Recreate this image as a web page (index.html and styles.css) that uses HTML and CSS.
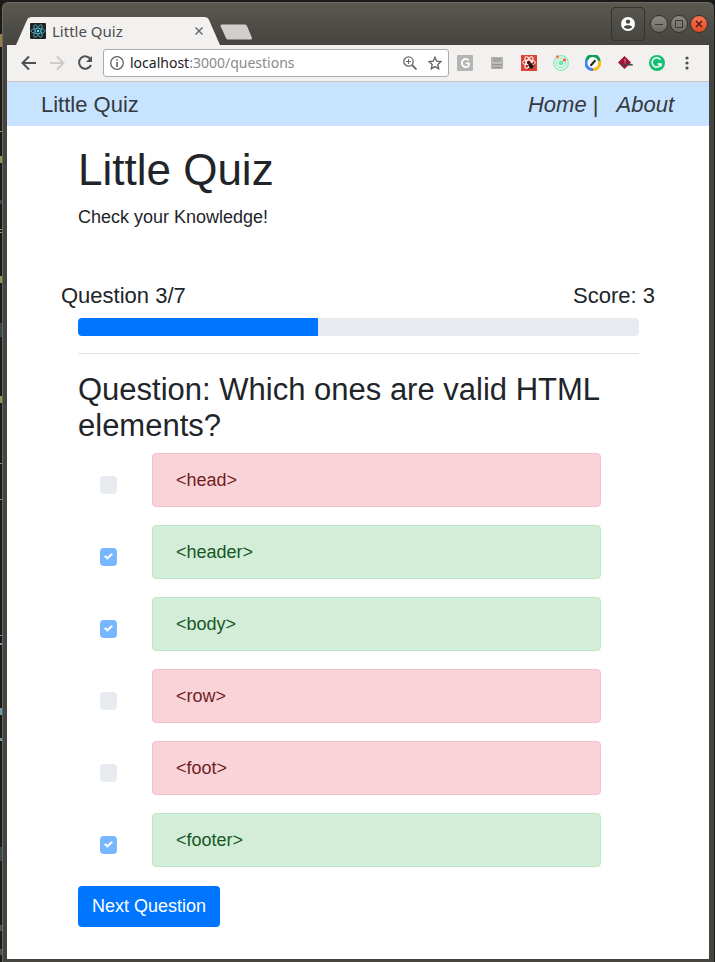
FILE: index.html
```html
<!DOCTYPE html>
<html lang="en">
<head>
<meta charset="utf-8">
<meta name="viewport" content="width=device-width, initial-scale=1">
<title>Little Quiz</title>
<link rel="stylesheet" href="styles.css">
</head>
<body>
<svg class="backdrop" aria-hidden="true" viewBox="0 0 2 962" preserveAspectRatio="none">
<path fill="#9a7a48" d="M0 34h2v13H0z"/><path fill="#a4914c" d="M0 131h2v1H0zM0 229h2v1H0zM0 232h2v1H0z"/>
<path fill="#7f9a55" d="M0 156h2v7H0zM0 276h2v7H0zM0 396h2v7H0z"/>
<path fill="#35474d" d="M0 200h2v4H0zM0 323h2v14H0zM0 847h2v14H0z"/>
<path fill="#888" d="M0 463h2v1H0zM0 499h2v1H0z"/>
<path fill="#7297ac" d="M0 635h2v1H0zM0 643h2v2H0zM0 708h2v7H0zM0 738h2v3H0z"/>
<path fill="#485650" d="M0 925h2v6H0zM0 949h2v6H0z"/>
</svg>
<div class="window">
  <div class="titlebar">
    <div class="tab">
      <svg class="tab-shape" viewBox="0 0 206 28" preserveAspectRatio="none" aria-hidden="true"><path fill="#f2f1f0" d="M0 28L11 3Q12 0 16 0H188Q192 0 193 3L204 28z"/></svg>
      <svg class="favicon" viewBox="0 0 16 16" aria-hidden="true"><rect width="16" height="16" rx="1" fill="#222"/><g fill="none" stroke="#4fb4ce" stroke-width=".8"><ellipse cx="8" cy="8" rx="7" ry="2.600"/><ellipse cx="8" cy="8" rx="7" ry="2.600" transform="rotate(60 8 8)"/><ellipse cx="8" cy="8" rx="7" ry="2.600" transform="rotate(120 8 8)"/></g><circle cx="8" cy="8" r="1.300" fill="#61dafb"/></svg>
      <span class="tab-title">Little Quiz</span>
      <button class="icon-button" type="button" aria-label="Close tab"><svg width="8" height="8" viewBox="0 0 8 8"><path d="M.5.5l7 7M7.500.5l-7 7" stroke="#666" stroke-width="1.400"/></svg></button>
    </div>
    <button class="icon-button new-tab" type="button" aria-label="New tab"><svg width="34" height="16" viewBox="0 0 34 16"><path d="M2.500.5H26Q27.500.5 28 2L33 14Q33 15.500 32 15.500H9Q7.500 15.500 7 14L1.500 2Q1 .5 2.500.5z" fill="#d0cfcd"/></svg></button>
    <div class="window-controls">
      <button class="profile" type="button" aria-label="Profile"><svg width="14" height="14" viewBox="0 0 14 14"><circle cx="7" cy="7" r="7" fill="#fff"/><circle cx="7" cy="4.600" r="2.200" fill="#494843"/><path d="M2.700 9.800C4 7.600 10 7.600 11.300 9.800 9.500 12.600 4.500 12.600 2.700 9.800z" fill="#494843"/></svg></button>
      <button class="control" type="button" aria-label="Minimize"><svg width="16" height="16" viewBox="0 0 16 16"><path d="M4 8.500h8" stroke="#3a3935"/></svg></button>
      <button class="control" type="button" aria-label="Maximize"><svg width="16" height="16" viewBox="0 0 16 16"><path d="M4.500 4.500h7v7h-7z" fill="none" stroke="#3a3935"/></svg></button>
      <button class="control close" type="button" aria-label="Close"><svg width="16" height="16" viewBox="0 0 16 16"><path d="M5 5l6 6M11 5l-6 6" stroke="#45180d" stroke-width="1.300"/></svg></button>
    </div>
  </div>
  <div class="toolbar">
    <button class="icon-button" type="button" aria-label="Back"><svg width="16" height="16" viewBox="0 0 16 16"><path d="M15 8H2M8 1.500L1.500 8 8 14.500" fill="none" stroke="#505050" stroke-width="2"/></svg></button>
    <button class="icon-button" type="button" aria-label="Forward"><svg width="16" height="16" viewBox="0 0 16 16"><path d="M1 8h13M8 1.500L14.500 8 8 14.500" fill="none" stroke="#cdcccb" stroke-width="2"/></svg></button>
    <button class="icon-button" type="button" aria-label="Reload"><svg width="16" height="16" viewBox="0 0 16 16"><path d="M13.600 4.300A6.200 6.200 0 1 0 14 10" fill="none" stroke="#505050" stroke-width="2"/><path d="M15 1v6H9z" fill="#505050"/></svg></button>
    <div class="address">
      <svg width="14" height="14" viewBox="0 0 14 14" aria-hidden="true"><circle cx="7" cy="7" r="6.300" fill="none" stroke="#5f5f5f" stroke-width="1.300"/><path d="M7 3.200v1.600M7 6v5" stroke="#5f5f5f" stroke-width="1.600"/></svg>
      <span class="url"><span class="host">localhost</span>:3000/questions</span>
      <button class="icon-button" type="button" aria-label="Zoom"><svg width="14" height="14" viewBox="0 0 14 14"><g fill="none" stroke="#666"><circle cx="5.500" cy="5.500" r="4.700" stroke-width="1.300"/><path d="M3 5.500h5M5.500 3v5"/><path d="M9 9l4.500 4.500" stroke-width="1.800"/></g></svg></button>
      <button class="icon-button" type="button" aria-label="Bookmark"><svg width="14" height="14" viewBox="0 0 14 14"><path d="M7 1.200l1.700 4 4.300.4-3.200 2.900.9 4.300L7 10.600l-3.700 2.200.9-4.300L1 5.600l4.300-.4z" fill="none" stroke="#5f5f5f" stroke-width="1.300"/></svg></button>
    </div>
    <div class="extensions" aria-hidden="true">
      <svg viewBox="0 0 16 16"><rect width="16" height="16" rx="1" fill="#b5b4b3"/><path d="M11.700 5.500C9.500 2.500 4.900 4 4.900 8s4.800 5.500 7 2.700V8.300H8.600" fill="none" stroke="#fff" stroke-width="1.700"/></svg>
      <svg viewBox="0 0 16 16"><path fill="#b2b1b0" d="M2 2h12v12H2z"/><path d="M4 4h8M5 6h6M3 9.500h10M4 12.500h8" stroke="#969594"/><path d="M3 8h10" stroke="#ccc"/></svg>
      <svg viewBox="0 0 16 16"><path fill="#db4437" d="M0 0h16v16H0z"/><g fill="none" stroke="#fff"><ellipse cx="8" cy="7.500" rx="6.500" ry="2.500"/><ellipse cx="8" cy="7.500" rx="6.500" ry="2.500" transform="rotate(60 8 7.500)"/><ellipse cx="8" cy="7.500" rx="6.500" ry="2.500" transform="rotate(120 8 7.500)"/></g><ellipse cx="10" cy="11" rx="2.200" ry="3" transform="rotate(-30 10 11)" fill="#28100d"/><circle cx="7.500" cy="7.500" r="1.500" fill="#28100d"/><path d="M5 11l8-3M7 14l7-4" stroke="#28100d" stroke-width=".7"/></svg>
      <svg viewBox="0 0 16 16"><g fill="none" stroke="#7df0b4"><circle cx="8" cy="8" r="7.300" stroke-width="1.300"/><circle cx="8" cy="8" r="4.700"/></g><circle cx="8" cy="8" r="2.400" fill="#69edaa"/><circle cx="4.500" cy="1.800" r="1.500" fill="#ff7043"/><circle cx="11.500" cy="5" r="1.600" fill="#ff5139"/></svg>
      <svg viewBox="0 0 16 16"><g fill="none" stroke-width="3"><path d="M1.700 5A6.500 6.500 0 0 1 14.300 6" stroke="#0c9d58"/><path d="M14.300 6A6.500 6.500 0 0 1 8 14.500" stroke="#fbbc18"/><path d="M8 14.500A6.500 6.500 0 0 1 1.700 5" stroke="#4285f4"/></g><circle cx="8" cy="8" r="5" fill="#fff"/><path d="M5.500 10.700L10.500 5.300" stroke="#222" stroke-width="2"/></svg>
      <svg viewBox="0 0 16 16"><path d="M7.500 1L14 7.500 7.500 14 1 7.500z" fill="#a61237"/><path d="M7 4l2 2M8 4v5" stroke="#d87188"/><path d="M4 8.500h9l3 1v1H5z" fill="#4c434a"/></svg>
      <svg viewBox="0 0 16 16"><circle cx="8" cy="8" r="8" fill="#15bf71"/><path d="M11.500 4.800A4.600 4.600 0 1 0 12 9H8.500M12 9v2.500" fill="none" stroke="#fff" stroke-width="1.500"/></svg>
    </div>
    <button class="icon-button" type="button" aria-label="Menu"><svg width="4" height="14" viewBox="0 0 4 14"><g fill="#505050"><circle cx="2" cy="2" r="1.600"/><circle cx="2" cy="7" r="1.600"/><circle cx="2" cy="12" r="1.600"/></g></svg></button>
  </div>
  <div class="page">
    <nav class="navbar">
      <a class="brand" href="#">Little Quiz</a>
      <div class="links"><span><a href="#">Home</a> |</span><a href="#">About</a></div>
    </nav>
    <main class="content">
      <h1>Little Quiz</h1>
      <p class="lead">Check your Knowledge!</p>
      <div class="status"><span>Question 3/7</span><span>Score: 3</span></div>
      <progress class="progress" value="3" max="7" aria-label="Quiz progress"></progress>
      <hr>
      <h2>Question: Which ones are valid HTML elements?</h2>
      <ul class="answers">
        <li class="answer"><input type="checkbox" id="a1" disabled><label class="wrong" for="a1">&lt;head&gt;</label></li>
        <li class="answer"><input type="checkbox" id="a2" checked disabled><label class="right" for="a2">&lt;header&gt;</label></li>
        <li class="answer"><input type="checkbox" id="a3" checked disabled><label class="right" for="a3">&lt;body&gt;</label></li>
        <li class="answer"><input type="checkbox" id="a4" disabled><label class="wrong" for="a4">&lt;row&gt;</label></li>
        <li class="answer"><input type="checkbox" id="a5" disabled><label class="wrong" for="a5">&lt;foot&gt;</label></li>
        <li class="answer"><input type="checkbox" id="a6" checked disabled><label class="right" for="a6">&lt;footer&gt;</label></li>
      </ul>
      <button class="next" type="button">Next Question</button>
    </main>
  </div>
</div>
</body>
</html>
```
FILE: styles.css
```css
* { box-sizing: border-box; }

body {
  margin: 0;
  padding: 2px 1px 0 2px;
  min-height: 100vh;
  display: flex;
  background: #1b1b19;
  color: #212529;
  font: 18px/26px "Liberation Sans", Arial, sans-serif;
}

button { font: inherit; cursor: pointer; }
svg { display: block; flex: none; }

.backdrop {
  position: absolute;
  left: 0;
  top: 0;
  width: 2px;
  height: 100%;
}

.window {
  flex: 1;
  min-width: 0;
  display: flex;
  flex-direction: column;
  padding: 0 5px 3px 4px;
  border: 1px solid #6b6963;
  border-width: 1px 0 0 1px;
  border-radius: 6px 6px 0 0;
  background: linear-gradient(#5b5850, #45443f 42px);
}

.icon-button {
  display: flex;
  padding: 0;
  border: 0;
  background: none;
}

/* Title bar */
.titlebar {
  display: flex;
  height: 42px;
  align-items: flex-end;
  padding: 0 1px 0 9px;
}

.tab {
  position: relative;
  display: flex;
  align-items: center;
  gap: 6px;
  width: 206px;
  height: 28px;
  padding: 0 19px 0 14px;
  color: #4c4c4c;
  font: 15px/20px "Noto Sans", "Open Sans", sans-serif;
}

.tab > * { position: relative; }

.tab .tab-shape {
  position: absolute;
  inset: 0;
  width: 100%;
  height: 100%;
}

.favicon { width: 16px; height: 16px; }
.tab-title { flex: 1; }
.new-tab { margin: 0 0 5px -3px; }

.window-controls {
  display: flex;
  align-items: center;
  gap: 2px;
  margin: 0 0 4px auto;
}

.profile {
  display: flex;
  align-items: center;
  justify-content: center;
  width: 34px;
  height: 34px;
  margin-right: 3px;
  padding: 0;
  border: 1px solid #34332f;
  border-radius: 4px;
  background: linear-gradient(#56544d, #474641);
}

.control {
  display: flex;
  width: 18px;
  height: 18px;
  padding: 0;
  border: 1px solid #34332f;
  border-radius: 50%;
  background: linear-gradient(#8b8982, #6b6963);
}

.control.close { background: linear-gradient(#f87350, #e04d26); }

/* Toolbar */
.toolbar {
  display: flex;
  align-items: center;
  gap: 12px;
  height: 37px;
  padding: 0 20px 0 14px;
  border-bottom: 1px solid #c6c4c2;
  background: #f2f1f0;
}

.address {
  flex: 1;
  min-width: 0;
  display: flex;
  align-items: center;
  gap: 11px;
  height: 28px;
  margin: 0 -4px 0 -2px;
  padding: 0 6px;
  border: 1px solid #adacaa;
  border-radius: 3px;
  background: #fff;
}

.url {
  flex: 1;
  margin-left: -5px;
  color: #8a8a8a;
  font: 14px/20px "Noto Sans", "Open Sans", sans-serif;
}

.host { color: #222; }

.extensions {
  display: flex;
  gap: 16px;
  margin-right: 8px;
}

.extensions svg { width: 16px; height: 16px; }

/* Page */
.page { flex: 1; background: #fff; }

.navbar {
  display: flex;
  align-items: center;
  justify-content: space-between;
  height: 44px;
  padding: 2px 35px 0 34px;
  background: #c8e3ff;
  color: #343a40;
  font-size: 22px;
}

.navbar a { color: inherit; text-decoration: none; }
.links { display: flex; gap: 18px; }
.links a { font-style: italic; }

.content { padding: 18px 70px 31px 71px; }

h1, h2 { margin: 0; font-weight: 400; }
h1 { font-size: 44px; line-height: 52px; }
.lead { margin: 8px 0 53px; }

.status {
  display: flex;
  justify-content: space-between;
  margin: 0 -16px 9px -17px;
  font-size: 22px;
}

.progress {
  display: block;
  width: 100%;
  height: 18px;
  border: 0;
  border-radius: 4px;
  overflow: hidden;
  appearance: none;
  background: #e7ebf0;
}

.progress::-webkit-progress-bar { background: #e7ebf0; }
.progress::-webkit-progress-value { background: #0075ff; }

hr {
  margin: 17px 0 18px;
  border: 0;
  border-top: 1px solid #e3e3e3;
}

h2 { font-size: 31px; line-height: 36px; }

.answers {
  display: grid;
  gap: 18px;
  margin: 9px 0 19px;
  padding: 0 38px 0 22px;
  list-style: none;
}

.answer {
  display: flex;
  align-items: center;
  gap: 35px;
}

.answer input {
  display: grid;
  place-items: center;
  width: 17px;
  height: 18px;
  margin: 9px 0 0;
  border-radius: 4px;
  appearance: none;
  background: #e7ebf0;
}

.answer input:checked { background: #76b8ff; }

.answer input:checked::after {
  content: "";
  width: 9px;
  height: 7px;
  background: #fff;
  clip-path: polygon(0 50%, 17% 33%, 38% 55%, 82% 3%, 100% 20%, 38% 96%);
}

.answer label {
  flex: 1;
  padding: 13px 23px;
  border: 1px solid transparent;
  border-radius: 4px;
}

.answer .wrong { color: #721c24; background-color: #f8d4d9; border-color: #f5c2ca; }
.answer .right { color: #155724; background-color: #d3edd9; border-color: #bfe6c9; }

.next {
  display: block;
  padding: 7px 14px 8px;
  border: 0;
  border-radius: 4px;
  color: #fff;
  background: #0075ff;
}
```
